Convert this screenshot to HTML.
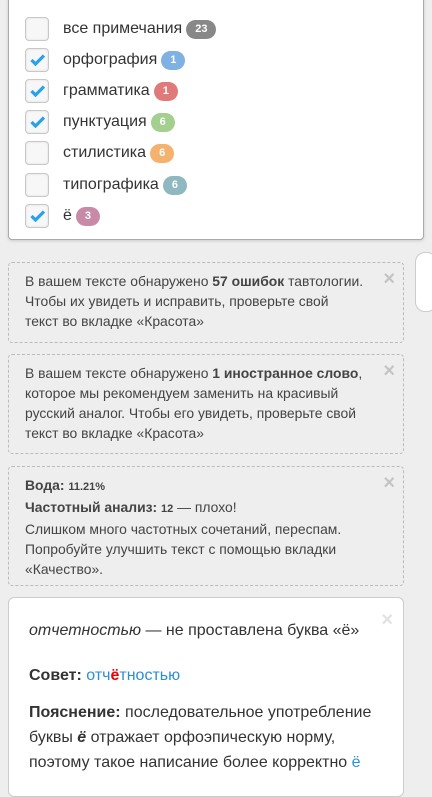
<!DOCTYPE html>
<html><head><meta charset="utf-8"><style>
*{margin:0;padding:0;box-sizing:border-box}
body{width:432px;height:766px;overflow:hidden;background:#eee;font-family:"Liberation Sans","DejaVu Sans",sans-serif;color:#333;position:relative}
.top{position:absolute;left:8px;top:-2px;width:416px;height:242px;background:#fff;border:1px solid #aaa;border-radius:0 0 4px 4px;box-shadow:0 1px 3px rgba(0,0,0,.15)}
.row{position:absolute;left:16px;height:24px;display:flex;align-items:center}
.cb{width:24px;height:24px;border:1px solid #c8c8c8;border-radius:4px;background:#f7f7f7;margin-right:14px;position:relative;box-shadow:inset 0 0 2px #ddd}
.cb svg{position:absolute;left:4px;top:5px}
.lbl{font-size:16px;color:#333}
.b{display:inline-block;color:#fff;font-size:11px;font-weight:bold;border-radius:10px;height:19px;line-height:19px;padding:0 9px;margin-left:4px;vertical-align:middle}
.n{position:absolute;left:8px;width:396px;border:1px dashed #bbb;border-radius:4px;font-size:13.9px;line-height:20px;padding:8px 16px;color:#444;white-space:nowrap}
.x{position:absolute;right:8px;top:6px;color:#c4c4c4;font-size:20px;font-weight:bold;line-height:20px}
.card{position:absolute;left:8px;top:597px;width:396px;height:200px;background:#fff;border:1px solid #ccc;border-radius:6px;padding:0 20px;font-size:16px;color:#333}
.scroll{position:absolute;left:415px;top:252px;width:22px;height:60px;background:#fff;border:1px solid #ccc;border-radius:10px}
</style></head><body>
<div class="top">
<div class="row" style="top:18px"><div class="cb"></div><span class="lbl">все примечания</span><span class="b" style="background:#888">23</span></div>
<div class="row" style="top:49px"><div class="cb"><svg width="15" height="12" viewBox="0 0 15 12"><path d="M1.5 6l4 4L14 1.5" stroke="#2aa2e8" stroke-width="3.2" fill="none"/></svg></div><span class="lbl">орфография</span><span class="b" style="background:#7fb1e3">1</span></div>
<div class="row" style="top:80px"><div class="cb"><svg width="15" height="12" viewBox="0 0 15 12"><path d="M1.5 6l4 4L14 1.5" stroke="#2aa2e8" stroke-width="3.2" fill="none"/></svg></div><span class="lbl">грамматика</span><span class="b" style="background:#e07a7a">1</span></div>
<div class="row" style="top:111px"><div class="cb"><svg width="15" height="12" viewBox="0 0 15 12"><path d="M1.5 6l4 4L14 1.5" stroke="#2aa2e8" stroke-width="3.2" fill="none"/></svg></div><span class="lbl">пунктуация</span><span class="b" style="background:#a3cf8f">6</span></div>
<div class="row" style="top:142px"><div class="cb"></div><span class="lbl">стилистика</span><span class="b" style="background:#f5b26e">6</span></div>
<div class="row" style="top:174px"><div class="cb"></div><span class="lbl">типографика</span><span class="b" style="background:#8fb8c0">6</span></div>
<div class="row" style="top:205px"><div class="cb"><svg width="15" height="12" viewBox="0 0 15 12"><path d="M1.5 6l4 4L14 1.5" stroke="#2aa2e8" stroke-width="3.2" fill="none"/></svg></div><span class="lbl">ё</span><span class="b" style="background:#c98aa8">3</span></div>
</div>
<div class="scroll"></div>
<div class="n" style="top:262px;height:81px"><span class="x">×</span>В вашем тексте обнаружено <b>57 ошибок</b> тавтологии.<br>Чтобы их увидеть и исправить, проверьте свой<br>текст во вкладке «Красота»</div>
<div class="n" style="top:354px;height:100px"><span class="x">×</span>В вашем тексте обнаружено <b>1 иностранное слово</b>,<br>которое мы рекомендуем заменить на красивый<br>русский аналог. Чтобы его увидеть, проверьте свой<br>текст во вкладке «Красота»</div>
<div class="n" style="top:466px;height:120px"><span class="x">×</span><b>Вода:</b> <b style="font-size:11px">11.21%</b><br><b>Частотный анализ:</b> <b style="font-size:11px">12</b> — плохо!<br>Слишком много частотных сочетаний, переспам.<br>Попробуйте улучшить текст с помощью вкладки<br>«Качество».</div>
<div class="card"><span class="x" style="right:10px;top:12px;color:#e2e2e2">×</span>
<div style="margin-top:23px;line-height:20px"><i>отчетностью</i> — не проставлена буква «ё»</div>
<div style="margin-top:25px;font-size:16px;line-height:20px"><b>Совет:</b> <span style="color:#2a8fd6">отч<span style="color:#e00;font-weight:bold">ё</span>тностью</span></div>
<div style="margin-top:14px;line-height:25px"><b>Пояснение:</b> последовательное употребление буквы <b><i>ё</i></b> отражает орфоэпическую норму, поэтому такое написание более корректно <span style="color:#2a8fd6">ё</span></div>
</div>
</body></html>
